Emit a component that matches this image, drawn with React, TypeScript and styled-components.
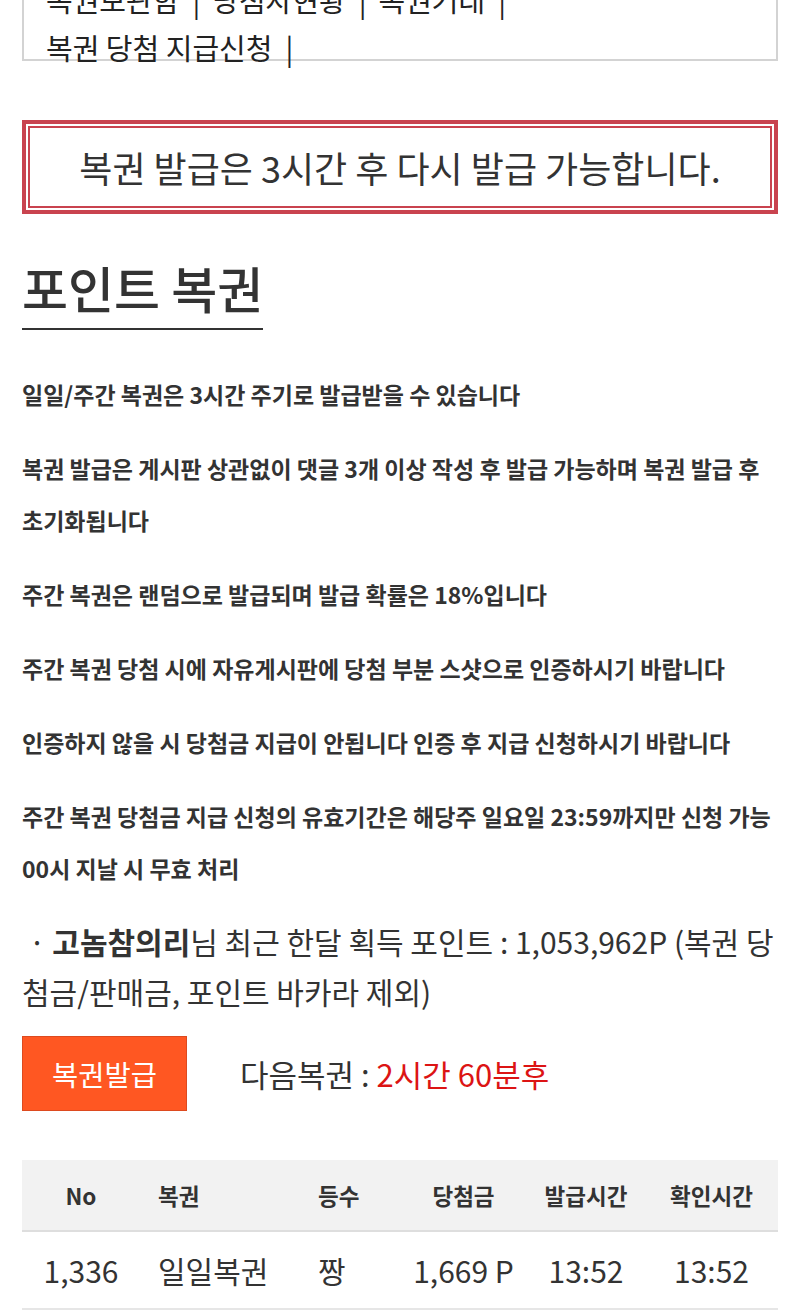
import styled, { createGlobalStyle } from 'styled-components'

const GlobalStyle = createGlobalStyle`
  * {
    box-sizing: border-box;
  }
  body {
    margin: 0;
    background: #fff;
    font-family: "Noto Sans CJK KR", "Noto Sans", sans-serif;
    color: #333;
  }
`

const Page = styled.div`
  padding: 0 22px;
  overflow: hidden;
`

const NavBox = styled.div`
  margin-top: -50px;
  height: 111px;
  border: 2px solid #d3d3d3;
  padding: 23px 22px 0;
  font-size: 29px;
  line-height: 48px;
  color: #222;
`

const NavItem = styled.span`
  display: inline-block;
  white-space: nowrap;
`

const NavSep = styled.span`
  margin: 0 12px 0 13px;
`

const Notice = styled.div`
  margin-top: 59px;
  height: 94px;
  border: 4px solid #c9434f;
  box-shadow: inset 0 0 0 2px #fff, inset 0 0 0 4px #c9434f;
  display: flex;
  align-items: center;
  justify-content: center;
  font-size: 36px;
  color: #333;
`

const Title = styled.h2`
  display: inline-block;
  margin: 45px 0 0;
  padding-bottom: 13px;
  border-bottom: 2px solid #333;
  font-size: 50px;
  line-height: 56px;
  font-weight: 500;
  color: #333;
`

const Rules = styled.div`
  margin-top: 38px;
`

const Rule = styled.p`
  margin: 0 0 22px;
  font-size: 23px;
  line-height: 52px;
  font-weight: 700;
  color: #333;
`

const PointInfo = styled.p`
  margin: 1px 0 0;
  font-size: 30px;
  line-height: 50px;
  color: #333;

  b {
    font-weight: 700;
  }
`

const IssueRow = styled.div`
  margin-top: 20px;
  display: flex;
  align-items: center;
`

const IssueButton = styled.button`
  width: 165px;
  height: 75px;
  border: 1px solid #dd4a1f;
  background: #ff5722;
  color: #fff;
  font-family: inherit;
  font-size: 28.5px;
  cursor: pointer;
`

const NextTime = styled.div`
  margin-left: 53px;
  font-size: 31px;
  color: #333;
`

const Remain = styled.span`
  color: #dc1414;
`

const Table = styled.table`
  margin-top: 49px;
  width: 100%;
  border-collapse: collapse;
  table-layout: fixed;
`

const HeadRow = styled.tr`
  background: #f2f2f2;
  border-bottom: 2px solid #dedede;
`

const BodyRow = styled.tr`
  border-bottom: 2px solid #e6e6e6;
`

const HeadCell = styled.th<{ $left?: boolean }>`
  height: 71px;
  padding: 0 0 0 ${(p) => (p.$left ? '18px' : '0')};
  text-align: ${(p) => (p.$left ? 'left' : 'center')};
  font-size: 22.5px;
  font-weight: 700;
  color: #333;
`

const BodyCell = styled.td<{ $left?: boolean }>`
  height: 78px;
  padding: 0 0 0 ${(p) => (p.$left ? '18px' : '0')};
  text-align: ${(p) => (p.$left ? 'left' : 'center')};
  font-size: 30px;
  color: #333;
  white-space: nowrap;
`

const navLinks = ['복권보관함', '당첨자현황', '복권거래', '복권 당첨 지급신청']

const rules = [
  '일일/주간 복권은 3시간 주기로 발급받을 수 있습니다',
  '복권 발급은 게시판 상관없이 댓글 3개 이상 작성 후 발급 가능하며 복권 발급 후 초기화됩니다',
  '주간 복권은 랜덤으로 발급되며 발급 확률은 18%입니다',
  '주간 복권 당첨 시에 자유게시판에 당첨 부분 스샷으로 인증하시기 바랍니다',
  '인증하지 않을 시 당첨금 지급이 안됩니다 인증 후 지급 신청하시기 바랍니다',
  '주간 복권 당첨금 지급 신청의 유효기간은 해당주 일요일 23:59까지만 신청 가능 00시 지날 시 무효 처리',
]

const columns = [
  { label: 'No', width: 118, left: false },
  { label: '복권', width: 160, left: true },
  { label: '등수', width: 100, left: true },
  { label: '당첨금', width: 127, left: false },
  { label: '발급시간', width: 118, left: false },
  { label: '확인시간', width: 133, left: false },
]

const history = [['1,336', '일일복권', '짱', '1,669 P', '13:52', '13:52']]

const App = () => {
  return (
    <>
      <GlobalStyle />
      <Page>
        <NavBox>
          {navLinks.map((link) => (
            <NavItem key={link}>
              {link}
              <NavSep>|</NavSep>
            </NavItem>
          ))}
        </NavBox>

        <Notice>복권 발급은 3시간 후 다시 발급 가능합니다.</Notice>

        <Title>포인트 복권</Title>

        <Rules>
          {rules.map((rule) => (
            <Rule key={rule}>{rule}</Rule>
          ))}
        </Rules>

        <PointInfo>
          &nbsp;·&nbsp;<b>고놈참의리</b>님 최근 한달 획득 포인트 : 1,053,962P (복권 당첨금/판매금, 포인트 바카라 제외)
        </PointInfo>

        <IssueRow>
          <IssueButton>복권발급</IssueButton>
          <NextTime>
            다음복권 : <Remain>2시간 60분후</Remain>
          </NextTime>
        </IssueRow>

        <Table>
          <colgroup>
            {columns.map((col) => (
              <col key={col.label} style={{ width: col.width }} />
            ))}
          </colgroup>
          <thead>
            <HeadRow>
              {columns.map((col) => (
                <HeadCell key={col.label} $left={col.left}>
                  {col.label}
                </HeadCell>
              ))}
            </HeadRow>
          </thead>
          <tbody>
            {history.map((row) => (
              <BodyRow key={row[0]}>
                {row.map((cell, i) => (
                  <BodyCell key={i} $left={columns[i].left}>
                    {cell}
                  </BodyCell>
                ))}
              </BodyRow>
            ))}
          </tbody>
        </Table>
      </Page>
    </>
  )
}

export default App
